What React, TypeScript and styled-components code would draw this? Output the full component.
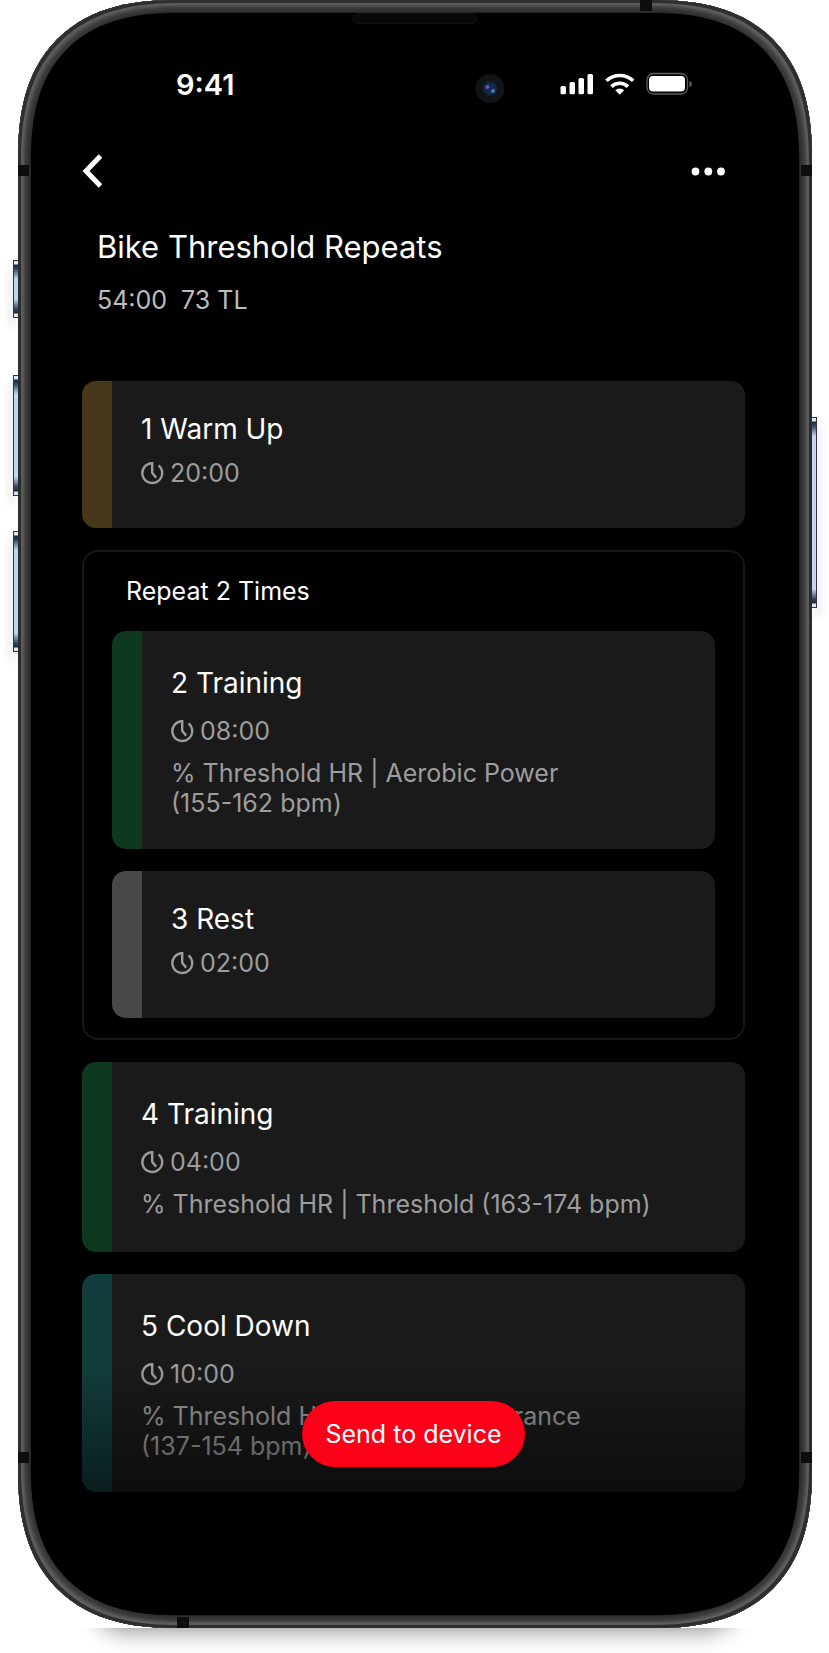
import React from "react";
import styled, { createGlobalStyle, css } from "styled-components";

const GlobalStyle = createGlobalStyle`
  *, *::before, *::after { box-sizing: border-box; }
  body {
    margin: 0;
    background: #fff;
    color: #fff;
    font-family: Inter, "Liberation Sans", sans-serif;
  }
  h1, h2, h3, p, ul, ol { margin: 0; padding: 0; font-weight: 400; }
  ol { list-style: none; }
`;

const Page = styled.main`
  padding: 0 17px 25px 18px;
`;

const Phone = styled.div`
  position: relative;
  padding: 13px;
  border-radius: 129px;
  background: #2c2c2c;
  box-shadow:
    inset 0 0 0 3px #2e2e2e,
    inset 0 0 0 5px #5c5c5c,
    inset 0 0 0 6px #525252,
    inset 0 0 0 7px #484848,
    inset 0 0 0 8px #404040,
    inset 0 0 0 10px #383838,
    inset 0 0 0 12px #303030,
    inset 0 0 0 13px #232323;

  @supports (corner-shape: superellipse(1.3)) {
    border-radius: 160px;
    corner-shape: superellipse(1.3);
  }
`;

const GroundShadow = styled.div`
  position: absolute;
  left: 50px;
  right: 50px;
  top: 100%;
  height: 25px;
  overflow: hidden;

  &::before {
    content: "";
    position: absolute;
    left: 28px;
    right: 28px;
    top: -60px;
    height: 60px;
    border-radius: 60px;
    box-shadow: 0 0 22px 4px rgba(0, 0, 0, 0.42);
  }
`;

const AntennaBand = styled.span<{ $edge: "left" | "right" | "top" | "bottom"; $at: string }>`
  position: absolute;
  background: #0d0d0d;
  ${({ $edge, $at }) =>
    $edge === "left" || $edge === "right"
      ? css`
          ${$edge}: 0;
          ${$at};
          width: 11px;
          height: 11px;
        `
      : css`
          ${$edge}: 0;
          ${$at};
          width: 12px;
          height: 11px;
        `}
`;

const SideButton = styled.span<{ $side: "left" | "right"; $top: number; $height: number }>`
  position: absolute;
  ${({ $side }) => $side}: -5px;
  top: ${({ $top }) => $top}px;
  width: 5px;
  height: ${({ $height }) => $height}px;
  border: 1px solid #2a3442;
  border-width: ${({ $side }) => ($side === "left" ? "1px 0 1px 1px" : "1px 1px 1px 0")};
  background: linear-gradient(
    #dde6f2 0, #dde6f2 3px, #1c2a3c 4px, #34465e 8px, #c3d3f0 18px,
    #c3d3f0 calc(100% - 18px), #34465e calc(100% - 8px), #1c2a3c calc(100% - 4px), #dde6f2 calc(100% - 3px)
  );
  box-shadow: ${({ $side }) => ($side === "left" ? "-3px" : "3px")} 8px 10px rgba(0, 0, 0, 0.12);
`;

const Screen = styled.div`
  position: relative;
  padding: 49px 54px 123px 51px;
  border-radius: 116px;
  background: #000;
  overflow: hidden;

  @supports (corner-shape: superellipse(1.3)) {
    border-radius: 147px;
    corner-shape: superellipse(1.3);
  }
`;

const Speaker = styled.span`
  position: absolute;
  top: 0;
  left: 50%;
  width: 125px;
  height: 11px;
  transform: translateX(-50%);
  border: 1px solid #111;
  border-radius: 5px;
  background: #090909;
`;

const StatusBar = styled.div`
  display: flex;
  align-items: center;
  height: 46px;
  padding: 0 53px 0 94px;
`;

const Clock = styled.time`
  flex: 1;
  font-size: 29px;
  line-height: 36px;
  font-weight: 600;
`;

const StatusIcons = styled.svg`
  display: block;
  flex: none;
`;

const NavBar = styled.nav`
  display: flex;
  align-items: center;
  justify-content: space-between;
  height: 40px;
  margin-top: 43px;
  padding-right: 17px;
`;

const IconButton = styled.button`
  display: flex;
  padding: 0;
  border: 0;
  background: none;
  color: #fff;
  cursor: pointer;
`;

const Header = styled.header`
  padding: 36px 15px 0;
`;

const Title = styled.h1`
  font-size: 31px;
  line-height: 40px;
`;

const Stats = styled.p`
  display: flex;
  gap: 14px;
  margin-top: 18px;
  color: #bdbdbd;
  font-size: 25px;
  line-height: 30px;
`;

const StepList = styled.ol`
  display: flex;
  flex-direction: column;
  gap: 22px;
`;

const Workout = styled(StepList)`
  margin-top: 66px;
`;

const StepCard = styled.li<{ $accent: string; $detailed: boolean }>`
  min-height: ${({ $detailed }) => ($detailed ? 190 : 147)}px;
  padding: ${({ $detailed }) => ($detailed ? "34px 29px 31px" : "30px 29px 40px")};
  border-left: 30px solid ${({ $accent }) => $accent};
  border-radius: 14px;
  background: #1a1a1a;
`;

const StepTitle = styled.h3`
  font-size: 28px;
  line-height: 36px;
`;

const Duration = styled.p<{ $detailed: boolean }>`
  display: flex;
  align-items: center;
  gap: 6px;
  margin-top: ${({ $detailed }) => ($detailed ? 15 : 11)}px;
  color: #9d9d9d;
  font-size: 25px;
  line-height: 30px;
`;

const Target = styled.p`
  max-width: 520px;
  margin-top: 12px;
  color: #9d9d9d;
  font-size: 25px;
  line-height: 30px;
`;

const RepeatGroup = styled.li`
  padding: 24px 28px 20px;
  border: 2px solid #171717;
  border-radius: 16px;
`;

const RepeatTitle = styled.h2`
  margin-bottom: 25px;
  padding-left: 14px;
  font-size: 25px;
  line-height: 30px;
`;

const BottomFade = styled.div`
  position: absolute;
  left: 0;
  right: 0;
  bottom: 0;
  display: flex;
  align-items: flex-start;
  justify-content: center;
  height: 250px;
  padding: 36px 54px 0 51px;
  background: linear-gradient(rgba(0, 0, 0, 0), #000);
`;

const SendButton = styled.button`
  height: 66px;
  padding: 0 23px;
  border: 0;
  border-radius: 33px;
  background: #fc001a;
  color: #fff;
  font-family: inherit;
  font-size: 25px;
  line-height: 30px;
  cursor: pointer;
`;

const ClockIcon = () => (
  <svg width="23" height="24" viewBox="0 0 23 24" fill="none" stroke="currentColor" strokeWidth="2.4" aria-hidden="true">
    <path d="M11.200 12.500V2.200A9.900 9.900 0 1 0 17.500 4.400" />
    <path d="M11.200 12l4 4.600" />
  </svg>
);

type Step = { name: string; time: string; accent: string; target?: string[] };

const StepItem = ({ name, time, accent, target }: Step) => (
  <StepCard $accent={accent} $detailed={!!target}>
    <StepTitle>{name}</StepTitle>
    <Duration $detailed={!!target}>
      <ClockIcon />
      {time}
    </Duration>
    {target && (
      <Target>
        {target.map((line, i) => (
          <React.Fragment key={line}>
            {i > 0 && <br />}
            {line}
          </React.Fragment>
        ))}
      </Target>
    )}
  </StepCard>
);

const warmUp: Step = { name: "1 Warm Up", time: "20:00", accent: "#48381a" };
const repeated: Step[] = [
  { name: "2 Training", time: "08:00", accent: "#0e3921", target: ["% Threshold HR | Aerobic Power", "(155-162 bpm)"] },
  { name: "3 Rest", time: "02:00", accent: "#484848" },
];
const remaining: Step[] = [
  { name: "4 Training", time: "04:00", accent: "#0e3921", target: ["% Threshold HR | Threshold (163-174 bpm)"] },
  { name: "5 Cool Down", time: "10:00", accent: "#123d3c", target: ["% Threshold HR | Aerobic Endurance", "(137-154 bpm)"] },
];

export default function App() {
  return (
    <>
      <GlobalStyle />
      <Page>
        <Phone>
          <SideButton $side="left" $top={260} $height={58} />
          <SideButton $side="left" $top={375} $height={121} />
          <SideButton $side="left" $top={531} $height={121} />
          <SideButton $side="right" $top={417} $height={191} />
          <GroundShadow />
          <Screen>
            <Speaker />
            <StatusBar>
              <Clock>9:41</Clock>
              <StatusIcons width="218" height="38" viewBox="474 66 218 38" role="img" aria-label="Camera, signal, Wi-Fi, battery">
                <defs>
                  <radialGradient id="lens">
                    <stop offset="0" stopColor="#10234a" />
                    <stop offset="0.65" stopColor="#16294d" />
                    <stop offset="1" stopColor="#0b1524" />
                  </radialGradient>
                </defs>
                <circle cx="490" cy="88.5" r="14.5" fill="#121315" />
                <circle cx="490" cy="88.5" r="8" fill="url(#lens)" />
                <circle cx="487.5" cy="87" r="2" fill="#5f5bb0" />
                <circle cx="493" cy="91" r="2" fill="#3f7db5" />
                <g fill="#fff">
                  <rect x="560.5" y="86" width="5.5" height="8.3" rx="1.6" />
                  <rect x="569.5" y="82" width="5.5" height="12.3" rx="1.6" />
                  <rect x="578.5" y="78" width="5.5" height="16.3" rx="1.6" />
                  <rect x="587.5" y="74" width="5.5" height="20.3" rx="1.6" />
                  <path d="M619.700 94.700l-4.400-4.400a6.400 6.400 0 0 1 8.800 0z" />
                </g>
                <g fill="none" stroke="#fff" strokeWidth="3.6">
                  <path d="M611.400 86.600a12 12 0 0 1 16.600 0" />
                  <path d="M606.400 80.800a19.600 19.600 0 0 1 26.800 0" />
                </g>
                <rect x="647" y="73.500" width="40.500" height="20.500" rx="6.500" fill="none" stroke="#5f5f5f" strokeWidth="1.3" />
                <rect x="649" y="76" width="36" height="15.500" rx="4" fill="#fff" />
                <path d="M689.500 81v6.500q2.300-.8 2.300-3.200t-2.300-3.300z" fill="#666" />
              </StatusIcons>
            </StatusBar>
            <NavBar aria-label="Workout">
              <IconButton type="button" aria-label="Back">
                <svg width="22" height="36" viewBox="0 0 22 36" fill="none" stroke="currentColor" strokeWidth="5">
                  <path d="M18.500 3L4 18l14.500 15" />
                </svg>
              </IconButton>
              <IconButton type="button" aria-label="More options">
                <svg width="40" height="36" viewBox="0 0 40 36" fill="currentColor">
                  <circle cx="7.500" cy="18.500" r="3.900" />
                  <circle cx="20.300" cy="18.500" r="3.900" />
                  <circle cx="33" cy="18.500" r="3.900" />
                </svg>
              </IconButton>
            </NavBar>
            <Header>
              <Title>Bike Threshold Repeats</Title>
              <Stats>
                <span>54:00</span>
                <span>73 TL</span>
              </Stats>
            </Header>
            <Workout>
              <StepItem {...warmUp} />
              <RepeatGroup>
                <RepeatTitle>Repeat 2 Times</RepeatTitle>
                <StepList>
                  {repeated.map((step) => (
                    <StepItem key={step.name} {...step} />
                  ))}
                </StepList>
              </RepeatGroup>
              {remaining.map((step) => (
                <StepItem key={step.name} {...step} />
              ))}
            </Workout>
            <BottomFade>
              <SendButton type="button">Send to device</SendButton>
            </BottomFade>
          </Screen>
          <AntennaBand $edge="left" $at="top: 165px" />
          <AntennaBand $edge="right" $at="top: 165px" />
          <AntennaBand $edge="left" $at="bottom: 165px" />
          <AntennaBand $edge="right" $at="bottom: 165px" />
          <AntennaBand $edge="top" $at="right: 160px" />
          <AntennaBand $edge="bottom" $at="left: 159px" />
        </Phone>
      </Page>
    </>
  );
}
